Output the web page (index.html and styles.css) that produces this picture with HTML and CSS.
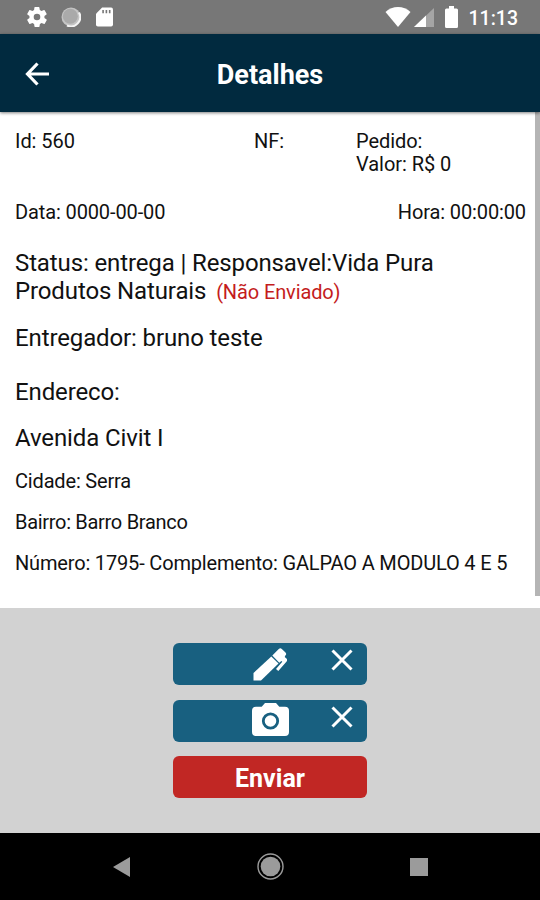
FILE: index.html
```html
<!DOCTYPE html>
<html lang="pt-BR">
<head>
    <meta charset="UTF-8" />
    <meta name="viewport" content="width=device-width, initial-scale=1.0"/>
    <title>Detalhes</title>
    <link rel="stylesheet" href="styles.css">
</head>
<body>
    <div class="status-bar">
        <div class="status-left">
            <svg class="icon-gear" viewBox="2 2 20 20" fill="#fff"><path d="M19.400 13a7.500 7.500 0 0 0 0-2l2.100-1.600a.5.5 0 0 0 .1-.6l-2-3.500a.5.5 0 0 0-.6-.2l-2.500 1a7.300 7.300 0 0 0-1.700-1l-.4-2.700a.5.5 0 0 0-.5-.4h-4a.5.5 0 0 0-.5.4L9.100 5.100a7.700 7.700 0 0 0-1.700 1l-2.500-1a.5.5 0 0 0-.6.2l-2 3.500a.5.5 0 0 0 .1.6L4.500 11a7.900 7.900 0 0 0 0 2l-2.100 1.600a.5.5 0 0 0-.1.6l2 3.500c.1.2.4.3.6.2l2.500-1a7.300 7.300 0 0 0 1.700 1l.4 2.700c0 .2.2.4.5.4h4c.2 0 .5-.2.5-.4l.4-2.700a7.700 7.700 0 0 0 1.700-1l2.500 1c.2.1.5 0 .6-.2l2-3.500a.5.5 0 0 0-.1-.6zM12 15.300a3.300 3.300 0 1 1 0-6.600 3.300 3.300 0 0 1 0 6.600z" fill-rule="evenodd"/></svg>
            <svg class="icon-sync" viewBox="0 0 20 20"><circle cx="10" cy="10" r="9.500" fill="#c4c4c4"/><path d="M18 5.500A9.300 9.300 0 0 1 6 18.500" fill="none" stroke="#f4f4f4" stroke-width="2"/><circle cx="9.300" cy="9.300" r="7.500" fill="#aaa"/></svg>
            <svg class="icon-sd" viewBox="0 0 18 20"><path d="M6.500 0H16a2 2 0 0 1 2 2v16a2 2 0 0 1-2 2H2a2 2 0 0 1-2-2V6.500z" fill="#fff"/><path d="M7.500 2.500v3.500M11 2.500v3.500M14.500 2.500v3.500" stroke="#777" stroke-width="1.700"/></svg>
        </div>
        <div class="status-right">
            <svg class="icon-wifi" viewBox="0 0 26 20"><path d="M13 20 .5 5C4 1.800 8.300 0 13 0s9 1.800 12.500 5z" fill="#fff"/></svg>
            <svg class="icon-signal" viewBox="0 0 20 19"><path d="M0 19 20 0v19z" fill="#a5a5a5"/><path d="M0 19 12 7.600V19z" fill="#fff"/></svg>
            <svg class="icon-battery" viewBox="0 0 13 22"><path d="M4 0h5v2.500h2.500A1.500 1.500 0 0 1 13 4v16.500a1.500 1.500 0 0 1-1.500 1.500h-10A1.500 1.500 0 0 1 0 20.500V4a1.500 1.500 0 0 1 1.500-1.500H4z" fill="#fff"/></svg>
            <span class="clock">11:13</span>
        </div>
    </div>

    <header class="top-container">
        <a class="back" href="#" aria-label="Voltar">
            <svg viewBox="0 0 24 24" fill="none" stroke="#fff" stroke-width="3.200"><path d="M24 12H2.500M12.500 1.500 2.500 12l10 10.500"/></svg>
        </a>
        <h1>Detalhes</h1>
    </header>

    <main class="details">
        <div class="row-top">
            <span class="col-id">Id: 560</span>
            <span class="col-nf">NF:</span>
            <span class="col-pedido">Pedido:<br>Valor: R$ 0</span>
        </div>
        <div class="row-date">
            <span>Data: 0000-00-00</span>
            <span>Hora: 00:00:00</span>
        </div>
        <p class="large status">Status: entrega | Responsavel:Vida Pura<br>Produtos Naturais <span class="not-sent">(Não Enviado)</span></p>
        <p class="large">Entregador: bruno teste</p>
        <p class="large address-title">Endereco:</p>
        <p class="large">Avenida Civit I</p>
        <p class="cidade">Cidade: Serra</p>
        <p class="bairro">Bairro: Barro Branco</p>
        <p class="numero">Número: 1795- Complemento: GALPAO A MODULO 4 E 5</p>
        <div class="scrollbar"></div>
    </main>

    <section class="actions">
        <div class="btn btn-blue">
            <svg class="icon-pen" viewBox="0 0 34 33"><path d="M.5 32.500V25L18.300 8.500l7.200 7L8 32.500z" fill="#fff"/><path d="M19.300 7.500 25.800 1a2.200 2.200 0 0 1 3 0l3.700 3.500a2 2 0 0 1 0 2.800l-.8 1.700 1.700 1.500a2.200 2.200 0 0 1 0 3.200L25.300 23 23 21l6.300-7.300-1-.7-2 1.700z" fill="#fff"/></svg>
            <svg class="icon-close" viewBox="0 0 22 22"><path d="M1.500 1.500l19 19M20.500 1.500l-19 19" stroke="#fff" stroke-width="3"/></svg>
        </div>
        <div class="btn btn-blue">
            <svg class="icon-camera" viewBox="0 0 37 33"><path d="M13 0h11l3.300 3.700H33a4 4 0 0 1 4 4V29a4 4 0 0 1-4 4H4a4 4 0 0 1-4-4V7.700a4 4 0 0 1 4-4h5.700z" fill="#fff"/><circle cx="18.500" cy="18" r="7.200" fill="#fff" stroke="#186080" stroke-width="2.800"/></svg>
            <svg class="icon-close" viewBox="0 0 22 22"><path d="M1.500 1.500l19 19M20.500 1.500l-19 19" stroke="#fff" stroke-width="3"/></svg>
        </div>
        <button class="btn btn-red">Enviar</button>
    </section>

    <nav class="navbar">
        <svg class="nav-back" viewBox="0 0 17 20"><path d="M0 10 17 0v20z" fill="#9b9b9b"/></svg>
        <svg class="nav-home" viewBox="0 0 27 27"><circle cx="13.500" cy="13.500" r="12.500" fill="none" stroke="#9b9b9b" stroke-width="1.400"/><circle cx="13.500" cy="13.500" r="9.800" fill="#9b9b9b"/></svg>
        <svg class="nav-recent" viewBox="0 0 18 18"><path d="M0 0h18v18H0z" fill="#9b9b9b"/></svg>
    </nav>
</body>
</html>
```
FILE: styles.css
```css
:root {
    --primary-color: #012a3f;
    --button-color: #186080;
    --danger-color: #c12724;
}
* { box-sizing: border-box; }
body {
    font-family: Roboto, sans-serif;
    font-size: 20px;
    line-height: 23px;
    color: #111;
    background-color: #fff;
    margin: 0;
    height: 900px;
    display: flex;
    flex-direction: column;
    overflow: hidden;
}
svg { display: block; }
.status-bar {
    display: flex;
    justify-content: space-between;
    background-color: #777;
    height: 34px;
    padding: 0 22px 0 27px;
}
.status-left, .status-right {
    display: flex;
    align-items: center;
}
.icon-gear { width: 20px; height: 20px; }
.icon-sync { width: 20px; height: 20px; margin-left: 14px; }
.icon-sd { width: 17px; height: 20px; margin-left: 15px; }
.icon-wifi { width: 26px; height: 20px; }
.icon-signal { width: 20px; height: 19px; margin-left: 3px; }
.icon-battery { width: 13px; height: 22px; margin-left: 11px; }
.clock {
    color: #fff;
    font-size: 19.5px;
    font-weight: 500;
    margin: 3px 0 0 11px;
}
.top-container {
    display: grid;
    grid-template-columns: 60px 1fr 60px;
    align-items: center;
    background-color: var(--primary-color);
    height: 78px;
    box-shadow: 0 1px 3px rgba(0,0,0,0.5);
    z-index: 1;
}
.back { padding: 1px 0 0 25px; }
.back svg { width: 24px; height: 24px; }
h1 {
    grid-column: 2;
    margin: 4px 0 0;
    color: #fff;
    font-size: 27px;
    line-height: 30px;
    font-weight: bold;
    text-align: center;
}
.details {
    position: relative;
    height: 496px;
    padding: 18px 14px 0 15px;
    white-space: nowrap;
    letter-spacing: -0.12px;
}
.details p { margin: 18px 0 0; }
.row-top {
    display: grid;
    grid-template-columns: 239px 102px 1fr;
    letter-spacing: -0.05px;
}
.row-date {
    display: flex;
    justify-content: space-between;
    margin-top: 25px;
}
.large {
    font-size: 24px;
    line-height: 28px;
}
.details .status { margin-top: 25px; }
.details .address-title { margin-top: 26px; }
.cidade, .numero { letter-spacing: -0.17px; }
.bairro { letter-spacing: -0.3px; }
.not-sent {
    color: #c41c1c;
    font-size: 20px;
    margin-left: 4px;
}
.scrollbar {
    position: absolute;
    top: 0;
    right: 0;
    width: 5px;
    height: 484px;
    background-color: #b5b5b5;
}
.actions {
    display: flex;
    flex-direction: column;
    align-items: center;
    gap: 14.5px;
    height: 225px;
    padding-top: 35px;
    background-color: #d2d2d2;
}
.btn {
    width: 194px;
    height: 42px;
    border: none;
    border-radius: 6px;
}
.btn-blue {
    display: grid;
    grid-template-columns: 1fr 37px 1fr;
    justify-items: center;
    background-color: var(--button-color);
}
.icon-pen, .icon-camera { grid-column: 2; }
.icon-pen { width: 34px; height: 33px; margin-top: 5px; }
.icon-camera { width: 37px; height: 33px; margin-top: 3px; }
.icon-close {
    width: 22px;
    height: 22px;
    margin: 6px 14px 0 0;
    justify-self: end;
}
.btn-red {
    background-color: var(--danger-color);
    color: #fff;
    font: bold 25px Roboto, sans-serif;
    padding: 3px 0 0;
}
.navbar {
    display: flex;
    justify-content: space-between;
    align-items: center;
    background-color: #000;
    height: 67px;
    padding: 0 112px 0 113px;
}
.nav-back { width: 17px; height: 20px; }
.nav-home { width: 27px; height: 27px; }
.nav-recent { width: 18px; height: 18px; }
```
